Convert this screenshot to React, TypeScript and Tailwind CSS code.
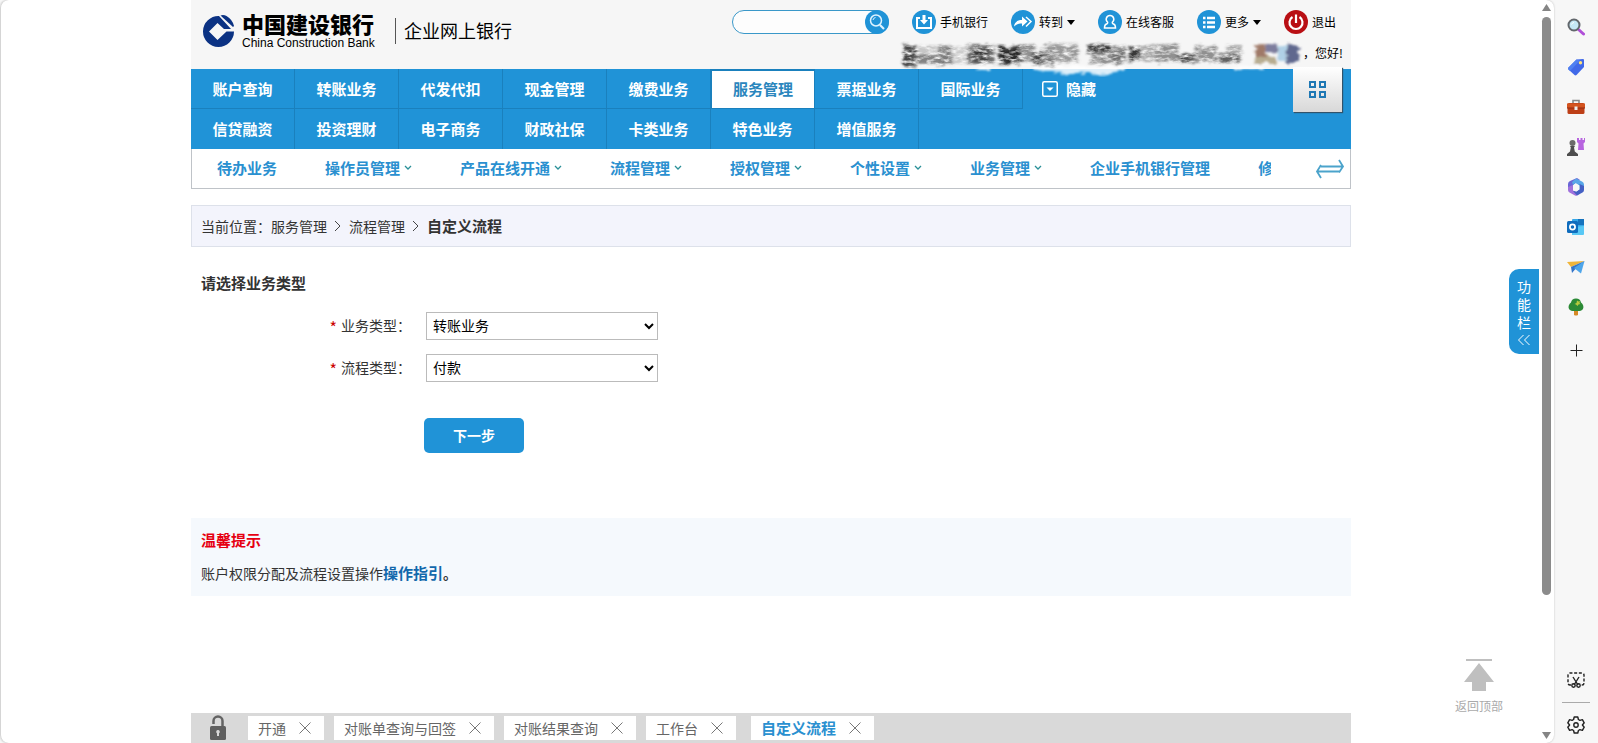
import type { ReactNode } from "react";

const NAV_ROWS = [
  [
    "账户查询",
    "转账业务",
    "代发代扣",
    "现金管理",
    "缴费业务",
    "服务管理",
    "票据业务",
    "国际业务",
  ],
  [
    "信贷融资",
    "投资理财",
    "电子商务",
    "财政社保",
    "卡类业务",
    "特色业务",
    "增值服务",
  ],
] as const;

const SUB_NAV = [
  { label: "待办业务", menu: false },
  { label: "操作员管理", menu: true },
  { label: "产品在线开通", menu: true },
  { label: "流程管理", menu: true },
  { label: "授权管理", menu: true },
  { label: "个性设置", menu: true },
  { label: "业务管理", menu: true },
  { label: "企业手机银行管理", menu: false },
] as const;

const FIELDS = [
  { id: "business-type", label: "业务类型：", value: "转账业务" },
  { id: "flow-type", label: "流程类型：", value: "付款" },
] as const;

const OPEN_TABS = ["开通", "对账单查询与回签", "对账结果查询", "工作台"] as const;

// Obscured company name: x, y, width, height, colour, opacity
const MASK_PATCHES = [
  [6, 3, 14, 22, "#333", 0.9],
  [18, 13, 24, 11, "#666", 0.8],
  [22, 4, 18, 9, "#bbb", 0.8],
  [42, 4, 14, 20, "#666", 0.85],
  [56, 6, 14, 18, "#bbb", 0.7],
  [71, 3, 28, 20, "#555", 0.85],
  [78, 8, 14, 12, "#222", 0.7],
  [102, 5, 24, 18, "#222", 0.95],
  [126, 3, 14, 18, "#777", 0.8],
  [138, 10, 20, 14, "#333", 0.9],
  [148, 3, 36, 18, "#888", 0.85],
  [194, 3, 22, 8, "#222", 0.9],
  [196, 10, 34, 13, "#777", 0.8],
  [218, 4, 14, 16, "#666", 0.7],
  [235, 6, 12, 15, "#222", 0.9],
  [248, 4, 14, 16, "#999", 0.8],
  [262, 3, 24, 18, "#777", 0.8],
  [286, 13, 16, 9, "#333", 0.85],
  [302, 5, 22, 16, "#777", 0.8],
  [326, 13, 22, 9, "#444", 0.85],
  [334, 4, 16, 10, "#888", 0.7],
] as const;

const MASK_COLOR_PATCHES = [
  [364, 3, 11, 12, "#8a5a44", 0.8],
  [364, 15, 20, 8, "#8c7a4c", 0.6],
  [375, 3, 11, 8, "#4a4a78", 0.7],
  [386, 5, 9, 15, "#a8cce4", 0.9],
  [395, 3, 13, 19, "#47507c", 0.85],
] as const;

function Logo() {
  return (
    <svg className="size-8 shrink-0" viewBox="0 0 32 32" fill="#0b3283" aria-hidden>
      <path d="M17 1A15.500 15.500 0 1 0 32 16.500H24.500L15.500 25 7 16.500 15.500 8 22 14H29Z" />
      <path d="M18.500.500Q21.500-.5 24.500 1 30.500 4.500 32 11L31 12Z" />
    </svg>
  );
}

function MaskedName() {
  return (
    <svg
      className="pointer-events-none absolute -top-1 right-full z-10 h-9 w-[406px]"
      viewBox="0 0 412 36"
      aria-hidden
    >
      <defs>
        <filter id="smear" x="-5%" y="-20%" width="110%" height="140%">
          <feTurbulence type="fractalNoise" baseFrequency="0.1 0.6" numOctaves="3" seed="4" result="noise" />
          <feDisplacementMap in="SourceGraphic" in2="noise" scale="9" xChannelSelector="R" yChannelSelector="G" result="moved" />
          <feGaussianBlur in="moved" stdDeviation="1" result="soft" />
          <feTurbulence type="fractalNoise" baseFrequency="0.13 0.35" numOctaves="3" seed="9" />
          <feColorMatrix values="0 0 0 0 0  0 0 0 0 0  0 0 0 0 0  2.200 0 0 0 -0.350" result="grain" />
          <feComposite in="soft" in2="grain" operator="in" />
        </filter>
        <filter id="smear-edge" x="-5%" y="-20%" width="110%" height="140%">
          <feTurbulence type="fractalNoise" baseFrequency="0.1 0.3" numOctaves="2" seed="2" result="noise" />
          <feDisplacementMap in="SourceGraphic" in2="noise" scale="8" xChannelSelector="R" yChannelSelector="G" />
          <feGaussianBlur stdDeviation="0.9" />
        </filter>
      </defs>
      <g filter="url(#smear-edge)">
        <path d="M140 25h90v5l-18 3h-50l-22-4ZM340 25h32v3h-30ZM80 26h14v3H82Z" fill="#fff" opacity="0.85" />
        {MASK_COLOR_PATCHES.map(([x, y, width, height, fill, opacity]) => (
          <rect key={`${x}-${y}`} x={x} y={y} width={width} height={height} fill={fill} opacity={opacity} />
        ))}
      </g>
      <g filter="url(#smear)">
        {MASK_PATCHES.map(([x, y, width, height, fill, opacity]) => (
          <rect key={`${x}-${y}`} x={x} y={y} width={width} height={height} fill={fill} opacity={opacity} />
        ))}
      </g>
    </svg>
  );
}

function Chevron() {
  return (
    <svg className="h-3 w-2 shrink-0" viewBox="0 0 8 12" fill="none" stroke="#2a9098" strokeWidth="1.300" aria-hidden>
      <path d="m1 5 3 3 3-3" />
    </svg>
  );
}

function Crumb() {
  return (
    <svg className="mx-[7px] h-3 w-2 shrink-0" viewBox="0 0 8 12" fill="none" stroke="#444" aria-hidden>
      <path d="m1 1 5 5-5 5" />
    </svg>
  );
}

function TopLink({
  label,
  caret,
  danger,
  children,
}: {
  label: string;
  caret?: boolean;
  danger?: boolean;
  children: ReactNode;
}) {
  return (
    <a href="#" className="flex items-center gap-1">
      <svg className="size-6" viewBox="0 0 24 24" fill="none" stroke="#fff" strokeWidth="2" aria-hidden>
        <circle cx="12" cy="12" r="12" stroke="none" fill={danger ? "#b90f14" : "#2093d7"} />
        {children}
      </svg>
      <span className="text-xs leading-4">{label}</span>
      {caret && (
        <svg className="h-[5px] w-2" viewBox="0 0 8 5" aria-hidden>
          <path d="M0 0h8L4 5Z" />
        </svg>
      )}
    </a>
  );
}

function Header() {
  return (
    <header className="flex h-[69px] justify-between bg-[#f6f6f6] text-black">
      <div className="flex h-[62px] items-center pl-[11px]">
        <Logo />
        <div className="ml-2 flex w-[146px] flex-col gap-1">
          <span className="text-[22px] leading-5 font-black">中国建设银行</span>
          <span className="text-xs leading-3 font-[Liberation_Sans]">China Construction Bank</span>
        </div>
        <span className="ml-[7px] h-[26px] w-px bg-[#555]" />
        <span className="ml-2 pb-[2px] text-lg">企业网上银行</span>
      </div>
      <div className="flex flex-col gap-[11px] pt-[10px]">
        <div className="flex items-center gap-[23px] pr-[15px]">
          <form className="flex h-6 w-[157px] rounded-full border border-[#3a98c9] bg-[#fdfdfd]">
            <input aria-label="搜索" className="min-w-0 flex-1 bg-transparent pl-3 text-xs outline-none" />
            <button type="button" aria-label="搜索" className="-my-px -mr-px size-6">
              <svg viewBox="0 0 24 24" fill="none" stroke="#dff3ff" aria-hidden>
                <circle cx="12" cy="12" r="12" fill="#2093d7" stroke="none" />
                <circle cx="11" cy="10.500" r="5.500" strokeWidth="1.500" />
                <path d="m15 15 4 4" strokeWidth="2.200" />
                <path d="M8 10a3 3 0 0 1 2.500-2.500" />
              </svg>
            </button>
          </form>
          <TopLink label="手机银行">
            <path d="M8 8H5v10h14V8h-3" />
            <path d="M10.500 5h3v5H16l-4 4.500L8 10h2.500Z" fill="#fff" stroke="none" />
          </TopLink>
          <TopLink label="转到" caret>
            <path d="M3 16.500c.5-4.500 3.500-6.500 8-6.500V6.500l5.500 5-5.500 5v-3c-3 0-5.500.5-8 3Z" fill="#fff" stroke="none" />
            <path d="m15 7 5 4.500-5 5" strokeWidth="1.500" />
          </TopLink>
          <TopLink label="在线客服">
            <path
              d="M12 5.500a3.700 3.700 0 0 0-2.500 6.500c.5.700 0 1.500-1 2-1.500.5-2 1.500-2 4h11c0-2.500-.5-3.500-2-4-1-.5-1.500-1.300-1-2A3.700 3.700 0 0 0 12 5.500Z"
              strokeWidth="1.500"
            />
          </TopLink>
          <TopLink label="更多" caret>
            <path d="M6 8h2.500M6 12.500h2.500M6 17h2.500M10 8h8M10 12.500h8M10 17h8" strokeWidth="2.500" />
          </TopLink>
          <TopLink label="退出" danger>
            <path d="M8.500 7a6.500 6.500 0 1 0 7 0M12 4.500V13" strokeWidth="2.200" />
          </TopLink>
        </div>
        <div className="flex justify-end pr-2">
          <div className="relative text-xs leading-4">
            <MaskedName />
            ，您好!
          </div>
        </div>
      </div>
    </header>
  );
}

function MainNav() {
  return (
    <nav className="flex justify-between bg-[#2093d7] text-[15px] font-bold text-white">
      <div>
        {NAV_ROWS.map((row, i) => (
          <div key={row[0]} className="flex">
            {row.map((item) => (
              <a
                key={item}
                href="#"
                className={
                  item === "服务管理"
                    ? "flex h-10 w-[104px] items-center justify-center border-x border-t-2 border-b border-[#1a80bd] bg-white pb-[2px] text-[#2a86bd]"
                    : i === 0
                      ? "flex h-10 w-[104px] items-center justify-center border-r border-b border-[#1a80bd]"
                      : "flex h-10 w-[104px] items-center justify-center border-r border-[#1a80bd]"
                }
              >
                {item}
              </a>
            ))}
            {i === 0 && (
              <button type="button" className="ml-[19px] flex items-center gap-2">
                <svg className="size-4" viewBox="0 0 16 16" fill="none" stroke="#fff" strokeWidth="1.500" aria-hidden>
                  <rect x="0.750" y="0.750" width="14.500" height="14.500" rx="1.500" />
                  <path d="M4.500 6.500h7L8 10Z" fill="#fff" stroke="none" />
                </svg>
                隐藏
              </button>
            )}
          </div>
        ))}
      </div>
      <button
        type="button"
        aria-label="全部功能"
        className="-mt-[2px] mr-[9px] flex h-[45px] w-[49px] items-center justify-center bg-linear-to-b from-white to-[#d8d8d8] shadow-[1px_1px_1px_#31536b]"
      >
        <svg className="size-[17px]" viewBox="0 0 17 17" fill="none" stroke="#1f78b4" strokeWidth="2" aria-hidden>
          <path d="M1 1h5v5H1ZM11 1h5v5h-5ZM1 11h5v5H1ZM11 11h5v5h-5Z" />
        </svg>
      </button>
    </nav>
  );
}

function SubNav() {
  return (
    <nav className="flex h-10 items-center justify-between border border-t-0 border-[#bfc3c8] pr-[5px] pl-[25px] text-[15px] font-bold text-[#2a90d0]">
      <div className="flex gap-12 pb-[2px] whitespace-nowrap">
        {SUB_NAV.map((item) => (
          <a key={item.label} href="#" className="flex items-center gap-1">
            {item.label}
            {item.menu && <Chevron />}
          </a>
        ))}
        <a href="#" className="w-[13px] overflow-hidden">
          修
        </a>
      </div>
      <button type="button" aria-label="切换菜单">
        <svg className="h-5 w-[30px]" viewBox="0 0 30 20" fill="none" stroke="#4ba3cb" strokeWidth="1.800" aria-hidden>
          <path d="M6 7.500h22M24 1l4 6.500-4 6M24 12.500H2M6 6l-4 6.500L6 19" />
        </svg>
      </button>
    </nav>
  );
}

function Tab({ label }: { label: string }) {
  return (
    <div className="flex h-6 items-center gap-[13px] bg-white pr-[13px] pl-[10px]">
      <a href="#">{label}</a>
      <button type="button" aria-label={`关闭${label}`}>
        <svg className="size-3" viewBox="0 0 12 12" stroke="#777" aria-hidden>
          <path d="m.5.500 11 11M11.500.500l-11 11" />
        </svg>
      </button>
    </div>
  );
}

function TabBar() {
  return (
    <footer className="mt-auto flex h-[30px] items-center bg-[#d9d9d9] text-sm text-[#666]">
      <button type="button" aria-label="锁定" className="ml-[18px]">
        <svg className="h-[26px] w-[18px]" viewBox="0 0 18 26" aria-hidden>
          <path d="M4.500 9V6a4.500 4.500 0 0 1 9 0v5" fill="none" stroke="#636363" strokeWidth="2.500" />
          <rect x="1" y="11" width="16" height="14" rx="1.500" fill="#5f5f5f" />
          <path d="M9 15a1.800 1.800 0 0 0-1 3.300V21h2v-2.700A1.800 1.800 0 0 0 9 15Z" fill="#d9d9d9" />
        </svg>
      </button>
      <div className="ml-[21px] flex gap-[10px]">
        {OPEN_TABS.map((tab) => (
          <Tab key={tab} label={tab} />
        ))}
      </div>
      <div className="ml-[15px] text-[15px] font-bold text-[#2a90d0]">
        <Tab label="自定义流程" />
      </div>
    </footer>
  );
}

const SIDE_ICONS: { name: string; art: ReactNode }[] = [
  {
    name: "搜索",
    art: (
      <>
        <path d="m11.500 11.500 5 4.500" stroke="#b04fd8" strokeWidth="3" strokeLinecap="round" />
        <circle cx="7" cy="7" r="5.500" fill="#c5e8f5" stroke="#62676c" strokeWidth="2" />
        <path d="M4.500 6.500a3 3 0 0 1 2.500-2" fill="none" stroke="#fff" />
      </>
    ),
  },
  {
    name: "购物",
    art: (
      <>
        <path d="M9.500 1.500 16 1q1 0 1 1v7l-7.500 8q-1 .8-2 0L1.500 11.500q-.8-1 0-2Z" fill="#4169e8" />
        <path d="M9.500 1.500 1.500 9.500q-.8 1 0 2l1.500 1.500L13 2.500Z" fill="#4f80f2" />
        <circle cx="13.500" cy="4.700" r="1.700" fill="#ffe27a" />
      </>
    ),
  },
  {
    name: "工具",
    art: (
      <>
        <path d="M6 5V2.500h6V5" fill="none" stroke="#888" strokeWidth="1.600" />
        <rect x="0.500" y="5" width="17" height="11" rx="1.500" fill="#bd3f17" />
        <path d="M0 5.500h18V10H0Z" fill="#d4541f" />
        <path d="M0 9.500h18v1H0Z" fill="#962b10" />
        <rect x="7.500" y="8.500" width="3" height="3.500" fill="#eee" />
      </>
    ),
  },
  {
    name: "游戏",
    art: (
      <>
        <path d="M10 0h2v2h1.500V0h2v2H17V0h1v4l-1.500 1.500.5 6.500h-6l.500-6.500L10 4Z" fill="#b764df" />
        <circle cx="5.500" cy="5" r="3" fill="#6a6a6a" />
        <path d="M3 8h5l-1 1.500.8 4L11 16v2H0v-2l3-2.500.8-4Z" fill="#4e4e4e" />
      </>
    ),
  },
  {
    name: "Microsoft 365",
    art: (
      <>
        <path d="M10 0 3 3Q1 4 1 6v6l5 1V7l7-5Z" fill="#6a66d6" />
        <path d="m9 .5 6 3q2 1 2 3V11l-5 1V7.500L8.500 5 6 7l-1-3Z" fill="#58a6e8" />
        <path d="M1 9v3q0 1.500 1.500 2.500L8 17.500q1 .5 2 0l3-2-7-3V7Z" fill="#a071dc" />
        <path d="M17 8v4q0 1.500-1.500 2.500L10 17.500 6 13l3.500.5L12.500 11V6Z" fill="#4560c4" />
        <path d="m9 5.500 3.500 2v4L9 13.500l-3-2v-4Z" fill="#f7f7f7" />
      </>
    ),
  },
  {
    name: "Outlook",
    art: (
      <>
        <rect x="5" y="1" width="12" height="15" rx="1" fill="#35a7e8" />
        <path d="M11 1h6v6h-6Z" fill="#1673bd" />
        <path d="m5 9 12-1v8q0 1-1 1H5Z" fill="#58c8f5" />
        <rect x="0" y="3" width="11" height="12" rx="1.500" fill="#0f6cbd" />
        <circle cx="5.500" cy="9" r="2.600" fill="none" stroke="#fff" strokeWidth="1.700" />
      </>
    ),
  },
  {
    name: "发送",
    art: (
      <>
        <path d="M17.500 3 0 4l4 5Z" fill="#f0b53a" />
        <path d="M17.500 3 4 9l1 6 3-3.500Z" fill="#3475c9" />
        <path d="M17.500 3 7 10l7 5.500Z" fill="#4da5ea" />
      </>
    ),
  },
  {
    name: "公益",
    art: (
      <>
        <path d="M7 11h4v6q-2 1-4 0Z" fill="#d68a26" />
        <path d="M9 .5a5 5 0 0 0-5 4C2 6 .8 8.500 2 11c1.500 2.500 5 2 7 2s5.500.5 7-2c1.200-2.500 0-5-2-6.500a5 5 0 0 0-5-4Z" fill="#2b8a36" />
        <path d="m10 2.500 1.500 1L13 3l-.5 2 1 1-2 .5-1 1.500-1.500-1.500L7.500 6l2-1Z" fill="#b5c93e" />
      </>
    ),
  },
];

function EdgeSidebar() {
  return (
    <aside className="flex w-11 shrink-0 flex-col items-center bg-[#f7f7f7] pt-[18px] pb-[9px]">
      <div className="flex flex-col gap-[22px]">
        {SIDE_ICONS.map((icon) => (
          <button key={icon.name} type="button" aria-label={icon.name}>
            <svg className="size-[18px]" viewBox="0 0 18 18" aria-hidden>
              {icon.art}
            </svg>
          </button>
        ))}
      </div>
      <button type="button" aria-label="添加" className="mt-7">
        <svg className="size-[13px]" viewBox="0 0 13 13" stroke="#222" aria-hidden>
          <path d="M6.500.500v12M.5 6.500h12" />
        </svg>
      </button>
      <button type="button" aria-label="截图" className="mt-auto">
        <svg className="size-[18px]" viewBox="0 0 18 18" fill="none" stroke="#222" strokeWidth="1.400" aria-hidden>
          <path d="M4 14H3a2 2 0 0 1-2-2V4a2 2 0 0 1 2-2h12a2 2 0 0 1 2 2v8a2 2 0 0 1-2 2h-1" strokeDasharray="3 1.700" />
          <path d="m6 6 5 8M12 6l-5 8" />
          <circle cx="6.500" cy="14.500" r="1.700" />
          <circle cx="11.500" cy="14.500" r="1.700" />
        </svg>
      </button>
      <span className="mt-[13px] h-px w-7 bg-[#aaa]" />
      <button type="button" aria-label="设置" className="mt-[13px]">
        <svg className="size-[18px]" viewBox="0 0 18 18" fill="none" stroke="#222" strokeWidth="1.400" strokeLinejoin="round" aria-hidden>
          <path d="M7.200 1h3.600l.6 2.500 1.500.9 2.500-.8 1.800 3.200L15.400 9l1.800 2.200-1.800 3.200-2.500-.8-1.500.9-.6 2.500H7.200l-.6-2.500-1.500-.9-2.500.8L.8 11.200 2.600 9 .8 6.800l1.800-3.200 2.500.8 1.500-.9Z" />
          <circle cx="9" cy="9" r="2.200" />
        </svg>
      </button>
    </aside>
  );
}

function ScrollBar() {
  return (
    <div className="flex w-3 shrink-0 flex-col pt-1 pr-[3px] pb-1" aria-hidden>
      <svg className="h-[7px] w-[9px]" viewBox="0 0 9 7" fill="#858585">
        <path d="M4.500 0 9 7H0Z" />
      </svg>
      <div className="mt-[6px] mb-[137px] flex-1 rounded-full bg-[#8b8b8b]" />
      <svg className="h-[7px] w-[9px]" viewBox="0 0 9 7" fill="#858585">
        <path d="M4.500 7 9 0H0Z" />
      </svg>
    </div>
  );
}

export default function App() {
  return (
    <div className="flex min-h-screen bg-[#f7f7f7] font-['Noto_Sans_CJK_SC',sans-serif] text-sm text-[#333]">
      <div className="relative flex flex-1 rounded-lg bg-white shadow-[inset_1px_0_0_#d5d5d5,0_0_2px_#bbb]">
        <main className="flex min-w-0 flex-1 justify-center">
          <div className="flex w-full max-w-[1160px] flex-col">
            <Header />
            <MainNav />
            <SubNav />

            {/* Breadcrumb */}
            <div className="mt-4 flex h-[42px] items-center border border-[#dde1ea] bg-[#f3f4fc] pl-[9px]">
              <span>当前位置：</span>
              <a href="#">服务管理</a>
              <Crumb />
              <a href="#">流程管理</a>
              <Crumb />
              <span className="text-[15px] font-bold">自定义流程</span>
            </div>

            {/* Business type form */}
            <form>
              <h1 className="mt-[25px] pl-[10px] text-[15px] leading-[22px] font-bold">请选择业务类型</h1>
              <div className="mt-[18px] flex flex-col gap-[14px]">
                {FIELDS.map((field) => (
                  <div key={field.id} className="flex h-7 items-center">
                    <label htmlFor={field.id} className="flex w-[220px] items-center justify-end gap-1 pb-[2px]">
                      <span className="pt-1 text-base leading-4 text-[#c00]">*</span>
                      {field.label}
                    </label>
                    <select
                      id={field.id}
                      className="ml-[15px] h-7 w-[232px] border border-[#bbb] bg-white pb-[2px] pl-[2px] text-black"
                    >
                      <option>{field.value}</option>
                    </select>
                  </div>
                ))}
              </div>
              <button
                type="button"
                className="mt-[36px] ml-[233px] h-[35px] w-[100px] rounded-[5px] bg-[#2093d7] pb-[2px] font-bold text-white"
              >
                下一步
              </button>
            </form>

            {/* Tips */}
            <section className="mt-[65px] h-[78px] bg-[#f5f9fd] px-[10px] pt-[11px]">
              <h2 className="text-[15px] leading-[22px] font-bold text-[#e60012]">温馨提示</h2>
              <p className="mt-[11px] leading-[22px]">
                账户权限分配及流程设置操作
                <a href="#" className="text-[15px] font-bold text-[#1268ac]">
                  操作指引
                </a>
                <b>。</b>
              </p>
            </section>

            <TabBar />
          </div>
        </main>
        <ScrollBar />

        {/* Floating tools */}
        <button
          type="button"
          className="absolute top-[269px] right-[15px] flex h-[85px] w-[30px] flex-col items-center rounded-l-[10px] bg-[#2093d7] pt-2 leading-[18px] text-white"
        >
          <span>功</span>
          <span>能</span>
          <span>栏</span>
          <svg className="mt-1 h-[10px] w-[14px]" viewBox="0 0 14 10" fill="none" stroke="#fff" aria-hidden>
            <path d="M6.500 0 1.500 5l5 5M12.500 0l-5 5 5 5" />
          </svg>
        </button>
        <a
          href="#"
          className="absolute right-[51px] bottom-7 flex flex-col items-center gap-[6px] text-xs leading-[18px] text-[#aaa]"
        >
          <svg className="h-8 w-[30px]" viewBox="0 0 30 32" fill="#bfbfbf" aria-hidden>
            <path d="M2 0h26v2H2ZM15 4l15 19h-8v9H8v-9H0Z" />
          </svg>
          返回顶部
        </a>
      </div>
      <EdgeSidebar />
    </div>
  );
}
